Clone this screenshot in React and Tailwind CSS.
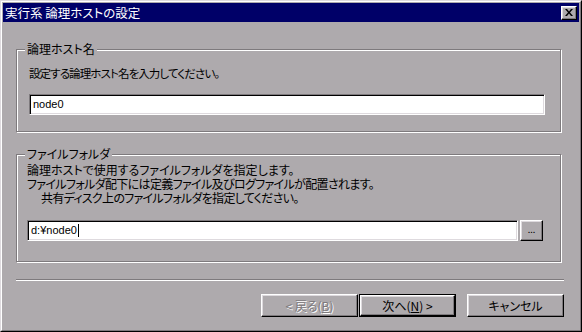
import React from "react";

const raised =
  "border border-t-white border-l-white border-r-black border-b-black shadow-[inset_-1px_-1px_0_#7e7a7d,inset_1px_1px_0_#dedade]";
const sunken =
  "border border-t-[#7e7a7d] border-l-[#7e7a7d] border-r-white border-b-white shadow-[inset_1px_1px_0_#000,inset_-1px_-1px_0_#dedade] bg-white";
const jp = "font-['Noto_Sans_CJK_JP',sans-serif] [font-feature-settings:'palt']";

function Group({ label, className, children }) {
  return (
    <div
      className={
        "relative w-[545px] border border-[#7e7a7d] shadow-[inset_1px_1px_0_#fff,1px_1px_0_#fff] " +
        className
      }
    >
      <span className="absolute -top-[8px] left-[8px] bg-[#aeaaad] px-[2px] text-[12px] leading-[14px]">
        {label}
      </span>
      {children}
    </div>
  );
}

export default function App() {
  return (
    <div className={"w-[582px] h-[332px] bg-[#aeaaad] text-black " + jp}>
      <div className="w-full h-full border border-t-[#dedade] border-l-[#dedade] border-r-black border-b-black">
        <div className="w-full h-full border border-t-white border-l-white border-r-[#7e7a7d] border-b-[#7e7a7d] p-[1px] flex flex-col">
          <div className="h-[19px] bg-[#000068] flex items-center justify-between pl-[2px] pr-[2px]">
            <span className="text-white text-[12.5px] leading-[14px]">実行系 論理ホストの設定</span>
            <div className={"w-[16px] h-[14px] bg-[#aeaaad] flex items-center justify-center " + raised}>
              <svg width="8" height="7" viewBox="0 0 8 7">
                <path d="M0 0h2l2 2.5L6 0h2L5 3.5 8 7H6L4 4.5 2 7H0l3-3.5z" fill="#000" />
              </svg>
            </div>
          </div>

          <div className="flex flex-col pl-[13px]">
            <Group label="論理ホスト名" className="mt-[27px] pt-[16px] pl-[12px] pb-[16px]">
              <div className="text-[11.5px] leading-[14px] tracking-[-0.9px]">設定する論理ホスト名を入力してください。</div>
              <div className={"mt-[14px] w-[516px] h-[21px] flex items-center pl-[3px] " + sunken}>
                <span className="font-['Liberation_Sans',sans-serif] text-[11px] leading-[13px]">node0</span>
              </div>
            </Group>

            <Group label="ファイルフォルダ" className="mt-[22px] pt-[8px] pl-[10px] pb-[20px]">
              <div className="text-[12px] leading-[14px]">
                <div>論理ホストで使用するファイルフォルダを指定します。</div>
                <div className="tracking-[-0.65px]">ファイルフォルダ配下には定義ファイル及びログファイルが配置されます。</div>
                <div className="pl-[14px] tracking-[-0.7px]">共有ディスク上のファイルフォルダを指定してください。</div>
              </div>
              <div className="mt-[15px] flex items-center gap-[2px]">
                <div className={"w-[491px] h-[21px] flex items-center pl-[3px] " + sunken}>
                  <span className="font-['Liberation_Sans',sans-serif] text-[11px] leading-[13px]">d:¥node0</span>
                  <span className="w-[1px] h-[13px] bg-black ml-[1px]" />
                </div>
                <div className={"w-[23px] h-[21px] flex items-center justify-center " + raised}>
                  <span className="text-[9px] leading-[9px] -mt-[2px]">...</span>
                </div>
              </div>
            </Group>

            <div className="mt-[17px] w-[548px] h-[2px] border-t border-t-[#7e7a7d] border-b border-b-white" />

            <div className="mt-[13px] flex w-[548px] justify-end">
              <div className={"w-[97px] h-[23px] flex items-center justify-center text-[12px] text-[#7e7a7d] [text-shadow:1px_1px_0_#fff] " + raised}>
                &lt; 戻る(<span className="underline">B</span>)
              </div>
              <div className="ml-[1px] w-[97px] h-[23px] border border-black">
                <div className={"w-full h-full flex items-center justify-center text-[12px] " + raised}>
                  次へ(<span className="underline">N</span>) &gt;
                </div>
              </div>
              <div className={"ml-[11px] w-[97px] h-[23px] flex items-center justify-center text-[12px] " + raised}>
                キャンセル
              </div>
            </div>
          </div>
        </div>
      </div>
    </div>
  );
}
